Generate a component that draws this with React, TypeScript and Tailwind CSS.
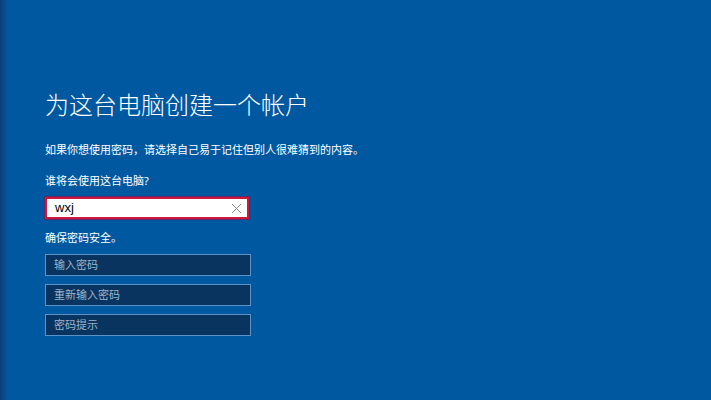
import React from "react";

const font = { fontFamily: '"Noto Sans", "Noto Sans CJK SC", sans-serif' };

function DarkField({ placeholder }: { placeholder: string }) {
  return (
    <div className="flex h-[22px] w-[206px] items-center border border-[#5b93c9] bg-[#08345f] pl-[8px] text-[11px] text-[#9fb3c9]">
      {placeholder}
    </div>
  );
}

export default function App() {
  return (
    <div className="flex h-[400px] w-full bg-[#0059a0] text-white" style={font}>
      {/* left edge shading */}
      <div className="w-[8px] bg-gradient-to-r from-[#0b3f78] to-[#0556a0]" />

      <div className="flex flex-col pl-[37px] pt-[90px]">
        <h1 className="text-[24px] leading-[30px] font-light">为这台电脑创建一个帐户</h1>

        <p className="mt-[22px] text-[11px] leading-[16px]">
          如果你想使用密码，请选择自己易于记住但别人很难猜到的内容。
        </p>

        <div className="mt-[15px] text-[11px] leading-[16px]">谁将会使用这台电脑?</div>

        <div className="mt-[8px] flex h-[22px] w-[204px] items-center justify-between border-2 border-[#d0163a] bg-white pl-[8px] pr-[5px] outline outline-1 outline-[#5a2a6a]">
          <span className="text-[13px] text-black" style={{ fontFamily: '"Liberation Sans", sans-serif' }}>
            wxj
          </span>
          <svg width="11" height="11" viewBox="0 0 11 11" className="text-[#8a8a8a]">
            <path d="M1 1L10 10M10 1L1 10" stroke="currentColor" strokeWidth="1" />
          </svg>
        </div>

        <div className="mt-[11px] text-[11px] leading-[16px]">确保密码安全。</div>

        <div className="mt-[8px] flex flex-col gap-[8px]">
          <DarkField placeholder="输入密码" />
          <DarkField placeholder="重新输入密码" />
          <DarkField placeholder="密码提示" />
        </div>
      </div>
    </div>
  );
}
